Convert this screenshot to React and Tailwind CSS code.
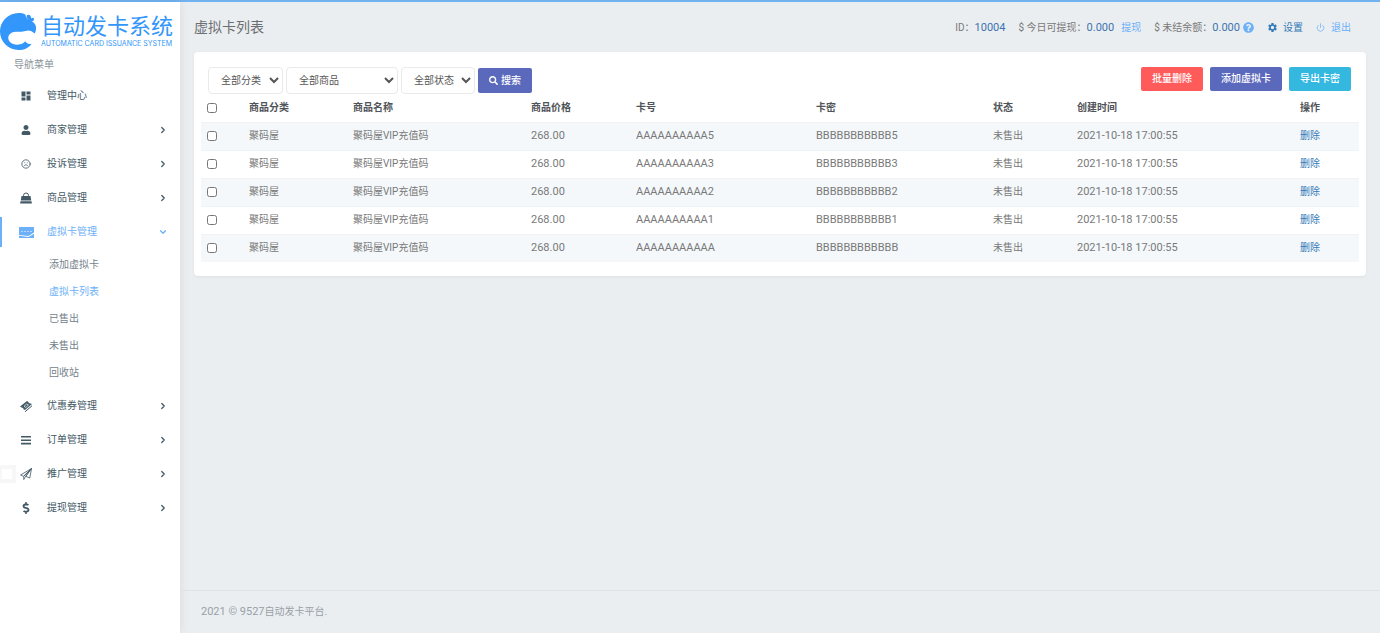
import React, { useState } from "react";
import { FaUser, FaSearch, FaQuestionCircle, FaDollarSign } from "react-icons/fa";
import { MdDashboard, MdSettings } from "react-icons/md";
import { ChevronDown, ChevronRight, Frown, Power } from "lucide-react";

const BagIcon = () => (
  <svg viewBox="0 0 24 24" className="w-3 h-3" fill="currentColor">
    <path d="M7 9V7a5 5 0 0 1 10 0v2" fill="none" stroke="currentColor" strokeWidth="2" />
    <path d="M3 8h18l1.500 9h-21z" />
    <path d="M1 18.500h22l.8 4.500H.2z" />
  </svg>
)

const CardIcon = () => (
  <svg viewBox="0 0 15 11" className="w-[15px] h-[11px]">
    <path d="M.5 0h14a.5.5 0 0 1 .5.5V5.500L9.500 9 0 8V.5A.5.5 0 0 1 .5 0z" fill="#6cb0f8" />
    <path d="M0 8.800l9.500 1.200L15 6.700v3.800a.5.5 0 0 1-.5.5H.5a.5.5 0 0 1-.5-.5z" fill="#6cb0f8" />
    <path d="M2 4.500h2m1 0h2m1 0h2m1 0h2" stroke="#b5d7fb" strokeWidth="1.200" />
  </svg>
)

const TicketIcon = () => (
  <svg viewBox="0 0 24 24" className="w-3 h-3" fill="currentColor">
    <path d="M0 13L14 2l3 2c0 1.500 1 2.500 2.500 2.500L24 8 10 20l-3-1.500c0-2-1.500-3-3-3z" />
    <path d="M8 12.500L13.500 8l3.500 2-5.500 5z" fill="none" stroke="#fff" strokeWidth="1.400" />
    <path d="M10 23.500L24 11.500" stroke="currentColor" strokeWidth="2" />
  </svg>
)

const BarsIcon = () => (
  <svg viewBox="0 0 10 10" className="w-[10px] h-[10px]" fill="currentColor">
    <path d="M0 1h10v1.600H0zM0 4.400h10V6H0zM0 7.800h10v1.600H0z" />
  </svg>
)

const PlaneIcon = () => (
  <svg viewBox="0 0 24 24" className="w-3 h-3" fill="none" stroke="currentColor" strokeWidth="1.600" strokeLinejoin="round">
    <path d="M23 1L1 14l6 2.500L23 1zM23 1l-3.500 19-8-3.500L23 1z" />
    <path d="M7.500 16.500V23l4-6.500L23 1z" />
  </svg>
)

const menu = [
  { name: "管理中心", icon: <MdDashboard size={12} /> },
  { name: "商家管理", icon: <FaUser size={10} />, arrow: true },
  { name: "投诉管理", icon: <Frown size={10} strokeWidth={2} />, arrow: true },
  { name: "商品管理", icon: <BagIcon />, arrow: true },
  {
    name: "虚拟卡管理",
    icon: <CardIcon />,
    arrow: true,
    children: ["添加虚拟卡", "虚拟卡列表", "已售出", "未售出", "回收站"],
  },
  { name: "优惠券管理", icon: <TicketIcon />, arrow: true },
  { name: "订单管理", icon: <BarsIcon />, arrow: true },
  { name: "推广管理", icon: <PlaneIcon />, arrow: true, handle: true },
  { name: "提现管理", icon: <FaDollarSign size={12} />, arrow: true },
]

const cards = [
  { id: 5, number: "AAAAAAAAAA5", secret: "BBBBBBBBBBB5" },
  { id: 4, number: "AAAAAAAAAA3", secret: "BBBBBBBBBBB3" },
  { id: 3, number: "AAAAAAAAAA2", secret: "BBBBBBBBBBB2" },
  { id: 2, number: "AAAAAAAAAA1", secret: "BBBBBBBBBBB1" },
  { id: 1, number: "AAAAAAAAAAA", secret: "BBBBBBBBBBBB" },
]

const Logo = () => (
  <a href="#" className="flex items-center h-[51px] pt-2 gap-1 text-[#3296fa]">
    <svg viewBox="0 0 38 40" className="w-[37px] h-[39px] shrink-0" fill="currentColor">
      <path d="M26 2.500C24 1.400 21.500 1 19 1 8.500 1 0 9.500 0 20s8.500 19 19 19c6 0 10.500-2.300 13.500-6.500-2.500.8-5 .3-6.500-2.500-1.500 1.500-3.500 3.500-8.500 3.500C12 33.500 8.500 30.500 8.500 26.500c0-3.500 3-6 7.500-6.300 4-.2 6.500.6 10-.6 4-1.400 6.500-.1 9.500 2.400C38.500 17 37 11.500 32.500 9.500 28.500 8.500 26.500 6 26 2.500z" />
      <path d="M27.300 4c.6-1.700 2.700-1.500 3.700-.5.9 1 .5 2.200 1.200 3 1-.2 1.500-.9 2.300-.3.900.8.3 2.800-1 3.400-1.800.7-3.500 0-4.300-1.300-.6-1.200-2.300-2.600-1.900-4.300z" />
    </svg>
    <span className="flex flex-col">
      <span className="text-[22px] leading-6 font-normal whitespace-nowrap">自动发卡系统</span>
      <span className="font-['Inter',sans-serif] text-[7px] leading-[10px] whitespace-nowrap">AUTOMATIC CARD ISSUANCE SYSTEM</span>
    </span>
  </a>
)

const Sidebar = () => {
  const [open, setOpen] = useState("虚拟卡管理")

  return (
    <aside className="w-[180px] shrink-0 bg-white shadow-[0_0_10px_rgba(0,0,0,0.08)]">
      <Logo />
      <p className="h-[26px] pl-[14px] leading-6 text-[#8c969d]">导航菜单</p>
      <nav className="text-[#435966]">
        {menu.map((item) => {
          const active = item.children && open === item.name
          return (
            <div key={item.name}>
              <button
                type="button"
                onClick={() => setOpen(open === item.name ? "" : item.name)}
                className={`relative flex items-center w-full h-[34px] pr-3 text-left ${active ? "text-[#6cb0f8]" : ""}`}
              >
                {active && <span className="absolute left-0 inset-y-0.5 w-0.5 bg-[#6cb0f8]"></span>}
                {item.handle && <span className="absolute left-0 w-4 h-[18px] border-4 border-l-2 border-[#f7f7f7] bg-white"></span>}
                <span className="flex justify-center w-4 ml-[18px] mr-[13px]">{item.icon}</span>
                <span className="flex-1">{item.name}</span>
                {item.arrow && (active ? <ChevronDown size={10} strokeWidth={3} /> : <ChevronRight size={10} strokeWidth={3} />)}
              </button>
              {active && (
                <ul className="pt-[2px] pb-[3px] text-[#75828b]">
                  {item.children.map((child) => (
                    <li key={child} className="h-[27px] leading-[27px] pl-[49px]">
                      <a href="#" className={child === "虚拟卡列表" ? "text-[#6cb0f8]" : ""}>{child}</a>
                    </li>
                  ))}
                </ul>
              )}
            </div>
          )
        })}
      </nav>
    </aside>
  )
}

const Header = () => (
  <header className="flex items-center justify-between h-[50px] pl-[14px] pr-[29px]">
    <h1 className="text-[14px] text-[#6b6f73]">虚拟卡列表</h1>
    <div className="flex items-center gap-[13px] pt-px text-[#797979]">
      <span>ID：<span className="text-[11px] text-[#3d74b0]">10004</span></span>
      <span className="flex items-center">
        $&nbsp;今日可提现：
        <span className="text-[11px] text-[#3d74b0] mr-[7px]">0.000</span>
        <a href="#" className="text-[#6cb0f8]">提现</a>
      </span>
      <span className="flex items-center">
        $&nbsp;未结余额：
        <span className="text-[11px] text-[#3d74b0] mr-[3px]">0.000</span>
        <FaQuestionCircle size={11} className="text-[#6cb0f8]" />
      </span>
      <a href="#" className="flex items-center gap-[5px] text-[#337ab7]"><MdSettings size={11} />设置</a>
      <a href="#" className="flex items-center gap-[6px] text-[#6cb0f8]"><Power size={9} />退出</a>
    </div>
  </header>
)

const Filters = () => (
  <div className="flex items-start justify-between pl-[7px] pr-2">
    <form className="flex items-center gap-[3px]" onSubmit={(e) => e.preventDefault()}>
      <select aria-label="分类" className="w-[75px] h-[27px] pl-2 border border-[#eaeaea] rounded-sm bg-white text-[#565656]">
        <option>全部分类</option>
      </select>
      <select aria-label="商品" className="w-[112px] h-[27px] pl-2 border border-[#eaeaea] rounded-sm bg-white text-[#565656]">
        <option>全部商品</option>
      </select>
      <select aria-label="状态" className="w-[74px] h-[27px] pl-2 border border-[#eaeaea] rounded-sm bg-white text-[#565656]">
        <option>全部状态</option>
      </select>
      <button className="flex items-center justify-center gap-[3px] w-[54px] h-[25px] rounded-xs bg-[#5b69bc] text-white font-medium">
        <FaSearch size={9} />搜索
      </button>
    </form>
    <div className="flex gap-[7px] text-white font-medium">
      <button className="h-6 w-[62px] rounded-xs bg-[#ff5b5b]">批量删除</button>
      <button className="h-6 w-[72px] rounded-xs bg-[#5b69bc]">添加虚拟卡</button>
      <button className="h-6 w-[62px] rounded-xs bg-[#35b8e0]">导出卡密</button>
    </div>
  </div>
)

const CardTable = () => {
  const [selected, setSelected] = useState([])

  const toggle = (id) => {
    setSelected(selected.includes(id) ? selected.filter((s) => s !== id) : [...selected, id])
  }

  const toggleAll = (e) => {
    setSelected(e.target.checked ? cards.map((c) => c.id) : [])
  }

  return (
    <table className="w-full table-fixed text-left text-[#797979]">
      <thead>
        <tr className="h-7 text-[#505458] [&>th]:pl-[6px] [&>th]:font-bold">
          <th className="w-[42px]">
            <input type="checkbox" aria-label="全选" className="block w-[10px] h-[10px]" checked={selected.length === cards.length} onChange={toggleAll} />
          </th>
          <th className="w-[104px]">商品分类</th>
          <th className="w-[178px]">商品名称</th>
          <th className="w-[105px]">商品价格</th>
          <th className="w-[180px]">卡号</th>
          <th className="w-[177px]">卡密</th>
          <th className="w-[84px]">状态</th>
          <th className="w-[223px]">创建时间</th>
          <th className="w-[65px]">操作</th>
        </tr>
      </thead>
      <tbody>
        {cards.map((card) => (
          <tr key={card.id} className="h-7 border-t border-[#eff3f6] odd:bg-[#f4f8fb] [&>td]:pl-[6px]">
            <td>
              <input type="checkbox" aria-label={card.number} className="block w-[10px] h-[10px]" checked={selected.includes(card.id)} onChange={() => toggle(card.id)} />
            </td>
            <td>聚码屋</td>
            <td>聚码屋VIP充值码</td>
            <td className="text-[11px]">268.00</td>
            <td className="text-[11px]">{card.number}</td>
            <td className="text-[11px]">{card.secret}</td>
            <td>未售出</td>
            <td className="text-[11px]">2021-10-18 17:00:55</td>
            <td><a href="#" className="text-[#337ab7]">删除</a></td>
          </tr>
        ))}
      </tbody>
    </table>
  )
}

const App = () => {
  return (
    <div className="flex min-h-screen border-t-2 border-[#71b2f1] bg-[#ebeef1] font-['Roboto','Noto_Sans_CJK_SC',sans-serif] text-[10px] leading-4">
      <Sidebar />
      <div className="flex flex-col flex-1 min-w-0">
        <Header />
        <main className="flex-1 px-[14px]">
          <section className="rounded bg-white px-[7px] pt-[15px] pb-[14px] shadow-[0_1px_3px_rgba(0,0,0,0.06)]">
            <Filters />
            <CardTable />
          </section>
        </main>
        <footer className="flex items-center h-[43px] pl-[21px] border-t border-[#dfe3e6] text-[#98a0a6] text-[11px]">
          <span>2021 © 9527<span className="text-[10px]">自动发卡平台.</span></span>
        </footer>
      </div>
    </div>
  );
};

export default App;
